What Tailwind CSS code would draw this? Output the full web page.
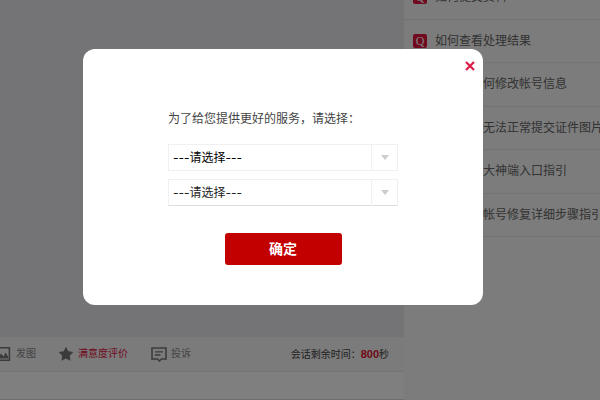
<!DOCTYPE html>
<html lang="zh-CN">
<head>
  <meta charset="UTF-8" />
  <meta name="viewport" content="width=device-width, initial-scale=1.0" />
  <title>在线客服</title>
  <script src="https://cdn.jsdelivr.net/npm/@tailwindcss/browser@4"></script>
</head>
<body class="h-screen overflow-hidden bg-white font-['Inter','Noto_Sans_CJK_SC',sans-serif] text-xs text-[#333]">
  <!-- 页面主体 -->
  <div class="flex h-full">
    <!-- 左侧聊天区 -->
    <main class="flex min-w-0 flex-1 flex-col">
      <div class="flex-1 bg-[#e8e8ec]"></div>

      <!-- 工具栏 -->
      <div class="flex h-9 items-center border-y border-[#e8e8ea] bg-[#f6f6f6] pr-[15px] text-[10px] text-[#888]">
        <button type="button" class="-ml-1 flex items-center gap-1">
          <svg class="size-4" viewBox="0 0 16 16" fill="none" stroke="#777" stroke-width="1.6">
            <path d="M.8 1.800h12.600v12.400H.8z" />
            <path d="M2.500 12.500V10.500l2.500-3 2.500 3 2-4 2.500 4v2z" fill="#777" stroke="none" />
          </svg>
          发图
        </button>
        <button type="button" class="ml-[22px] flex items-center gap-1 text-[#e0153f]">
          <svg class="size-4" viewBox="0 0 16 16" fill="#777">
            <path d="M8 .8l2.300 4.500 5 .8-3.500 3.600.7 5L8 12.500l-4.500 2.200.7-5L.7 6.100l5-.8z" />
          </svg>
          满意度评价
        </button>
        <button type="button" class="ml-[23px] flex items-center gap-1">
          <svg class="size-4" viewBox="0 0 16 16" fill="none" stroke="#777" stroke-width="1.6">
            <path d="M1 2h14v11h-4.500L8.500 15l-2-2H1z" />
            <path d="M4 5.800h8M4 9h5.500" stroke-width="1.300" />
          </svg>
          投诉
        </button>
        <p class="ml-auto whitespace-nowrap text-[#444]">会话剩余时间：<b class="font-['Liberation_Sans',sans-serif] text-[11px] text-[#e0102f]">800</b>秒</p>
      </div>

      <!-- 输入区 -->
      <div class="h-7 border-b border-[#ddd] bg-white"></div>
    </main>

    <!-- 右侧常见问题 -->
    <aside class="w-[196px] shrink-0 overflow-hidden bg-[#f8f8f8]">
      <ul class="-mt-6 grid h-[261px] auto-rows-fr whitespace-nowrap text-[#666]">
        <li class="flex items-center border-b border-[#e6e6e6] pl-[9px]">
          <a href="#" class="flex items-center gap-2"><span class="grid size-3.5 place-items-center rounded-xs bg-[#e0153f] font-['Liberation_Serif',serif] text-xs leading-none text-white">Q</span>如何提交资料</a>
        </li>
        <li class="flex items-center border-b border-[#e6e6e6] pl-[9px]">
          <a href="#" class="flex items-center gap-2"><span class="grid size-3.5 place-items-center rounded-xs bg-[#e0153f] font-['Liberation_Serif',serif] text-xs leading-none text-white">Q</span>如何查看处理结果</a>
        </li>
        <li class="flex items-center border-b border-[#e6e6e6] pl-[9px]">
          <a href="#" class="flex items-center gap-2"><span class="grid size-3.5 place-items-center rounded-xs bg-[#e0153f] font-['Liberation_Serif',serif] text-xs leading-none text-white">Q</span>大神端如何修改帐号信息</a>
        </li>
        <li class="flex items-center border-b border-[#e6e6e6] pl-[9px]">
          <a href="#" class="flex items-center gap-2"><span class="grid size-3.5 place-items-center rounded-xs bg-[#e0153f] font-['Liberation_Serif',serif] text-xs leading-none text-white">Q</span>为什么我无法正常提交证件图片</a>
        </li>
        <li class="flex items-center border-b border-[#e6e6e6] pl-[9px]">
          <a href="#" class="flex items-center gap-2"><span class="grid size-3.5 place-items-center rounded-xs bg-[#e0153f] font-['Liberation_Serif',serif] text-xs leading-none text-white">Q</span>帐号修复大神端入口指引</a>
        </li>
        <li class="flex items-center border-b border-[#e6e6e6] pl-[9px]">
          <a href="#" class="flex items-center gap-2"><span class="grid size-3.5 place-items-center rounded-xs bg-[#e0153f] font-['Liberation_Serif',serif] text-xs leading-none text-white">Q</span>自助服务帐号修复详细步骤指引</a>
        </li>
      </ul>
    </aside>
  </div>

  <!-- 弹窗 -->
  <div class="fixed inset-0 flex items-center justify-center bg-black/50 pr-[34px] pb-[46px]">
    <form role="dialog" aria-label="请选择服务" class="relative w-full max-w-[400px] rounded-xl bg-white px-[85px] pt-15 pb-10">
      <button type="button" aria-label="关闭" class="absolute top-2.5 right-1.5 p-0.5">
        <svg class="size-2.5" viewBox="0 0 10 10" stroke="#dc1c48" stroke-width="2.2">
          <path d="M1 1l8 8M9 1L1 9" />
        </svg>
      </button>

      <p id="tip" class="whitespace-nowrap text-xs leading-5 text-[#444]">为了给您提供更好的服务，请选择：</p>

      <div class="relative mt-[15px]">
        <select id="type" aria-labelledby="tip" class="block h-[27px] w-full appearance-none border border-[#f0f0f0] bg-white pl-1 text-xs text-black">
          <option>---请选择---</option>
        </select>
        <span class="pointer-events-none absolute inset-y-0 right-0 grid w-[27px] place-items-center border-l border-[#f0f0f0]">
          <svg class="h-[5px] w-2" viewBox="0 0 8 5" fill="#ccc"><path d="M0 0h8L4 5z" /></svg>
        </span>
      </div>

      <div class="relative mt-2">
        <select id="subtype" aria-labelledby="tip" class="block h-[27px] w-full appearance-none border border-[#f0f0f0] border-b-[#ddd] bg-white pl-1 text-xs text-[#222]">
          <option>---请选择---</option>
        </select>
        <span class="pointer-events-none absolute inset-y-0 right-0 grid w-[27px] place-items-center border-l border-[#f0f0f0]">
          <svg class="h-[5px] w-2" viewBox="0 0 8 5" fill="#ccc"><path d="M0 0h8L4 5z" /></svg>
        </span>
      </div>

      <button type="submit" class="mx-auto mt-[27px] block h-8 w-[117px] rounded-[3px] bg-[#c30000] text-sm font-bold text-white">确定</button>
    </form>
  </div>
</body>
</html>
